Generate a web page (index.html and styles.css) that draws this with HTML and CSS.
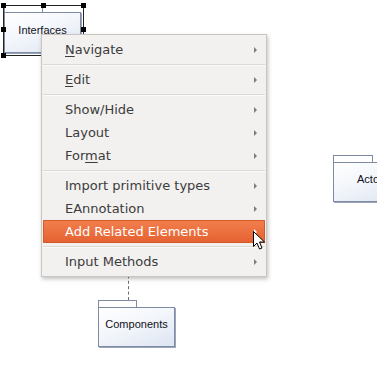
FILE: index.html
```html
<!DOCTYPE html>
<html>
<head>
<title>Diagram</title>
	<link rel="stylesheet" href="styles.css">
</head>
<body>
	<div class="canvas">

		<div class="pkg interfaces">
			<div class="tab"></div>
			<div class="box">Interfaces</div>
		</div>
		<div class="selection">
			<span class="handle h-tl"></span><span class="handle h-tc"></span><span class="handle h-tr"></span>
			<span class="handle h-ml"></span><span class="handle h-mr"></span>
			<span class="handle h-bl"></span><span class="handle h-bc"></span><span class="handle h-br"></span>
		</div>

		<div class="link"></div>

		<div class="pkg components">
			<div class="tab"></div>
			<div class="box">Components</div>
		</div>

		<div class="pkg actor">
			<div class="tab"></div>
			<div class="box">Actor</div>
		</div>

		<div class="menu">
			<div class="item"><span><u>N</u>avigate</span><i class="arrow"></i></div>
			<div class="sep"></div>
			<div class="item"><span><u>E</u>dit</span><i class="arrow"></i></div>
			<div class="sep"></div>
			<div class="item"><span>Show/Hide</span><i class="arrow"></i></div>
			<div class="item"><span>Layout</span><i class="arrow"></i></div>
			<div class="item"><span>For<u>m</u>at</span><i class="arrow"></i></div>
			<div class="sep"></div>
			<div class="item"><span>Import primitive types</span><i class="arrow"></i></div>
			<div class="item"><span>EAnnotation</span><i class="arrow"></i></div>
			<div class="item active"><span>Add Related Elements</span><i class="arrow"></i></div>
			<div class="sep"></div>
			<div class="item"><span>Input Methods</span><i class="arrow"></i></div>
		</div>

		<svg class="cursor" width="13" height="20" viewBox="0 0 13 20">
			<path d="M0.5 0.5 L0.5 15.5 L4 12 L6.5 18 L9 17 L6.5 11 L11.5 11 Z" fill="#fff" stroke="#000" stroke-width="1" stroke-linejoin="miter"/>
		</svg>
	</div>
</body>
</html>
```
FILE: styles.css
```css
	body{
		margin:0;
		background-color:#ffffff;
		font-family:"Liberation Sans", Arial, sans-serif;
	}
	.canvas{
		position:relative;
		width:377px;
		height:367px;
		overflow:hidden;
	}

	/* packages on the diagram */
	.pkg{
		position:absolute;
		display:flex;
		flex-direction:column;
		align-items:flex-start;
	}
	.pkg .tab{
		width:37px;
		height:6px;
		border:1px solid #7f8ba3;
		border-bottom:none;
		background:#ffffff;
	}
	.pkg .box{
		box-sizing:border-box;
		width:77px;
		height:40px;
		padding-bottom:6px;
		border:1px solid #7f8ba3;
		box-shadow:1px 1px 0 #9aa5bb;
		background:linear-gradient(160deg, #ffffff 0%, #f3f6fb 45%, #dde5f2 100%);
		font-size:11px;
		color:#101020;
		display:flex;
		align-items:center;
		justify-content:center;
	}
	.interfaces{ left:4px; top:5px; }
	.interfaces .box{ height:41px; }
	.components{ left:98px; top:300px; }
	.actor{ left:333px; top:155px; }
	.actor .tab{ width:38px; }
	.actor .box{ width:70px; justify-content:flex-start; padding-left:23px; }

	.selection{
		position:absolute;
		left:3px;
		top:5px;
		width:79px;
		height:49px;
		border:1px solid #222;
	}
	.handle{
		position:absolute;
		width:5px;
		height:5px;
		background:#000;
	}
	.h-tl{ left:-3px; top:-3px; }
	.h-tc{ left:37px; top:-3px; }
	.h-tr{ right:-3px; top:-3px; }
	.h-ml{ left:-3px; top:21px; }
	.h-mr{ right:-3px; top:21px; }
	.h-bl{ left:-3px; bottom:-3px; }
	.h-bc{ left:37px; bottom:-3px; }
	.h-br{ right:-3px; bottom:-3px; }

	.link{
		position:absolute;
		left:128px;
		top:270px;
		height:30px;
		border-left:1px dashed #6d6d6d;
	}

	/* popup menu */
	.menu{
		position:absolute;
		left:41px;
		top:34px;
		width:222px;
		padding:3px 1px;
		background:#f2f1f0;
		border:1px solid #c9c5c0;
		box-shadow:1px 2px 4px rgba(0,0,0,0.25);
		font-family:"DejaVu Sans", sans-serif;
		font-size:13px;
		color:#3c3c3c;
	}
	.item{
		height:23px;
		display:flex;
		align-items:center;
		justify-content:space-between;
		padding:0 8px 0 22px;
	}
	.item u{
		text-decoration:underline;
		text-underline-offset:2px;
	}
	.item.active{
		background:linear-gradient(#f27f4e, #e56131);
		box-shadow:inset 0 0 0 1px #d6592a;
		color:#ffffff;
		border-radius:1px;
	}
	.arrow{
		width:0;
		height:0;
		border-left:3px solid #7d7d7d;
		border-top:3px solid transparent;
		border-bottom:3px solid transparent;
	}
	.item.active .arrow{ border-left-color:#ffffff; }
	.sep{
		height:1px;
		margin:3px 0;
		background:#dcd8d3;
		box-shadow:0 1px 0 #fbfbfa;
	}

	.cursor{
		position:absolute;
		left:253px;
		top:231px;
	}
```
